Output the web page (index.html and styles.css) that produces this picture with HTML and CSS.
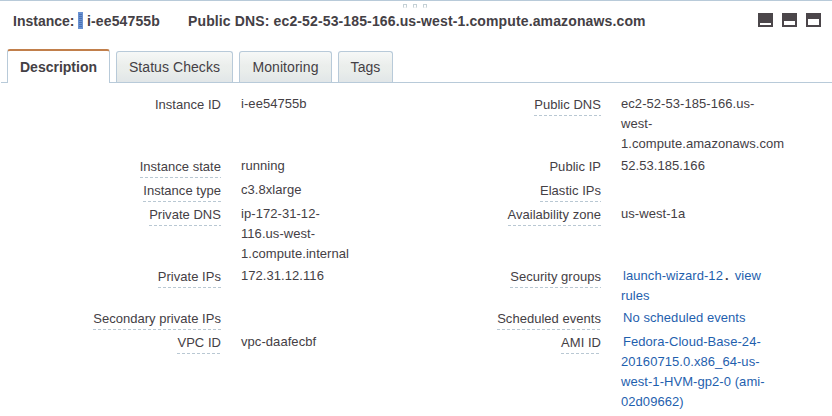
FILE: index.html
```html
<!DOCTYPE html>
<html lang="en">
<head>
<meta charset="utf-8">
<title>Instance details</title>
<link rel="stylesheet" href="styles.css">
</head>
<body>
<main class="panel">
  <div class="grip"><i></i><i></i><i></i></div>
  <header class="header">
    <span class="instance">Instance:</span><span class="marker"></span><span class="instance-id">i-ee54755b</span>
    <span class="dns">Public DNS: ec2-52-53-185-166.us-west-1.compute.amazonaws.com</span>
    <div class="sizes">
      <svg width="15" height="14"><path fill="#4b464a" d="M0 0h15v14H0z"/><path fill="#fff" d="M2 10h11v2H2z"/></svg>
      <svg width="15" height="14"><path fill="#4b464a" d="M0 0h15v14H0z"/><path fill="#fff" d="M2 8h11v4H2z"/></svg>
      <svg width="15" height="14"><path fill="#4b464a" d="M0 0h15v14H0z"/><path fill="#fff" d="M2 6h11v6H2z"/></svg>
    </div>
  </header>
  <nav class="tabs">
    <div class="tab active"><span>Description</span></div>
    <div class="tab status"><span>Status Checks</span></div>
    <div class="tab monitoring"><span>Monitoring</span></div>
    <div class="tab tags"><span>Tags</span></div>
  </nav>
  <section class="details">
    <div class="label"><span class="plain">Instance ID</span></div><div class="value">i-ee54755b</div>
    <div class="label"><span>Public DNS</span></div><div class="value">ec2-52-53-185-166.us-<br>west-<br>1.compute.amazonaws.com</div>
    <div class="label"><span>Instance state</span></div><div class="value">running</div>
    <div class="label"><span class="plain">Public IP</span></div><div class="value">52.53.185.166</div>
    <div class="label"><span>Instance type</span></div><div class="value">c3.8xlarge</div>
    <div class="label"><span>Elastic IPs</span></div><div class="value"></div>
    <div class="label"><span>Private DNS</span></div><div class="value">ip-172-31-12-<br>116.us-west-<br>1.compute.internal</div>
    <div class="label"><span>Availability zone</span></div><div class="value">us-west-1a</div>
    <div class="label"><span>Private IPs</span></div><div class="value">172.31.12.116</div>
    <div class="label"><span>Security groups</span></div><div class="value"><a class="inset">launch-wizard-12</a><b class="dot">.</b><a>view<br>rules</a></div>
    <div class="label"><span>Secondary private IPs</span></div><div class="value"></div>
    <div class="label"><span>Scheduled events</span></div><div class="value"><a class="inset">No scheduled events</a></div>
    <div class="label"><span>VPC ID</span></div><div class="value">vpc-daafecbf</div>
    <div class="label"><span>AMI ID</span></div><div class="value"><a class="inset">Fedora-Cloud-Base-24-<br>20160715.0.x86_64-us-<br>west-1-HVM-gp2-0 (ami-<br>02d09662)</a></div>
  </section>
</main>
</body>
</html>
```
FILE: styles.css
```css
* { box-sizing: border-box; }
body {
  margin: 0;
  background: #fff;
  color: #444045;
  font: 13px/20px "Liberation Sans", Arial, sans-serif;
  letter-spacing: 0.06px;
}
.panel { height: 416px; overflow: hidden; border-top: 1px solid #b8cad9; position: relative; }
.grip { position: absolute; top: 3px; left: 403px; display: flex; gap: 6px; }
.grip i { width: 4px; height: 4px; border: 1px solid #c4d0d5; border-bottom-color: #f2f4f5; }
.header {
  display: flex;
  align-items: center;
  height: 40px;
  padding: 0 11px 0 13px;
  font-size: 14px;
  font-weight: bold;
  letter-spacing: 0.13px;
}
.instance { width: 65px; white-space: nowrap; letter-spacing: 0; }
.marker {
  width: 5px;
  height: 17px;
  margin-top: -1px;
  background: repeating-linear-gradient(#6a92d2 0 1px, #4b72b4 1px 2px);
  border: 1px solid #6a92d2;
}
.instance-id { width: 105px; padding-left: 4px; }
.dns { white-space: nowrap; }
.sizes { display: flex; gap: 9px; margin: -3px 0 0 auto; }
.sizes svg { display: block; }
.tabs {
  display: flex;
  align-items: flex-end;
  gap: 6px;
  height: 42px;
  margin-left: 1px;
  padding-left: 6px;
  border-bottom: 1px solid #b8cad9;
  font-size: 14px;
}
.tab {
  height: 31px;
  padding-top: 5px;
  border: 1px solid #b8cad9;
  border-bottom: 0;
  border-radius: 3px 3px 0 0;
  background: linear-gradient(#f6f8f7, #ebeeec 45%, #e9edeb 65%, #e1e6e8);
  text-align: center;
  white-space: nowrap;
}
.tab.active {
  width: 103px;
  height: 34px;
  margin-bottom: -1px;
  padding-top: 6px;
  border-top: 2px solid #c17f4b;
  background: #fff;
  font-weight: bold;
  letter-spacing: 0;
}
.status { width: 117px; }
.monitoring { width: 93px; }
.tags { width: 55px; }
.details {
  display: grid;
  grid-template-columns: 221px 159px 221px 231px;
  padding-top: 11px;
}
.label {
  height: 24px;
  padding-top: 1px;
  text-align: right;
  white-space: nowrap;
  letter-spacing: 0.03px;
}
.label span {
  display: inline-block;
  height: 21px;
  background: repeating-linear-gradient(90deg, #b9c8d3 0 3px, transparent 3px 5px) left bottom / 100% 1px no-repeat;
}
.label .plain { background: none; }
.value { padding: 0 0 2px 20px; white-space: nowrap; }
.value a { color: #1f5fae; }
.inset { margin-left: 2px; }
.dot { margin: 0 6px 0 2px; }
```
